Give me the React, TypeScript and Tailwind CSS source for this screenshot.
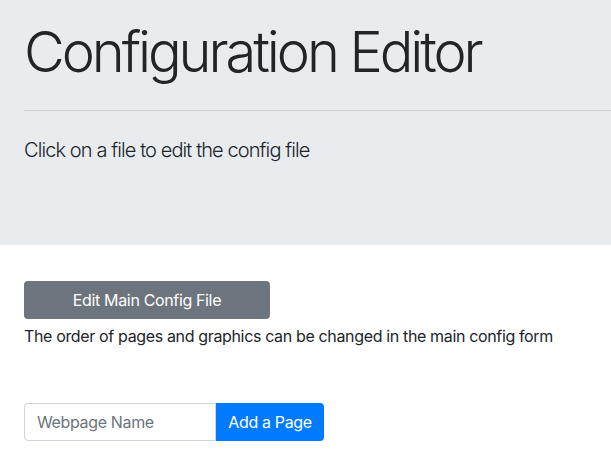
export default function App() {
  return (
    <div className="min-h-screen bg-white text-[#212529] font-['Inter',sans-serif] tracking-[-0.022em]">
      <div className="bg-[#e9ecef] pt-[19px] pb-[64px] pl-6">
        <h1 className="text-[56px] font-light leading-[1.2] tracking-[-0.055em]">Configuration Editor</h1>
        <hr className="my-6 border-0 border-t border-black/10" />
        <p className="text-[20px] font-light leading-[1.5] tracking-[-0.045em] mb-4">
          Click on a file to edit the config file
        </p>
      </div>
      <div className="px-6 pt-[36px]">
        <button className="w-[246px] h-[38px] rounded bg-[#6c757d] text-white text-base leading-6">
          Edit Main Config File
        </button>
        <p className="mt-[5px] text-base leading-6">
          The order of pages and graphics can be changed in the main config form
        </p>
        <div className="mt-[55px] flex">
          <input
            type="text"
            placeholder="Webpage Name"
            className="w-[192px] h-[38px] px-3 border border-[#ced4da] rounded-l text-base tracking-[-0.022em] placeholder:text-[#6c757d] outline-none"
          />
          <button className="w-[108px] h-[38px] bg-[#007bff] text-white text-base rounded-r">Add a Page</button>
        </div>
      </div>
    </div>
  );
}
